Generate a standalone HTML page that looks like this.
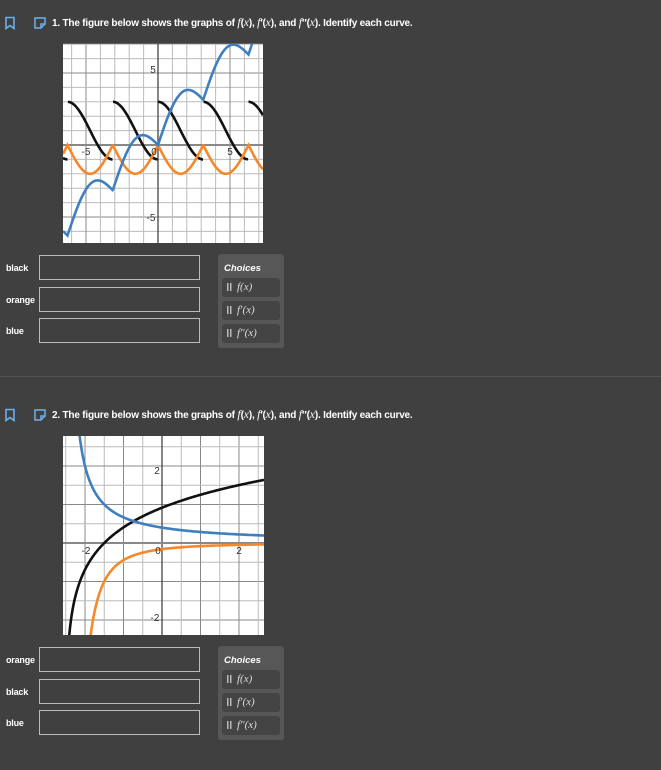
<!DOCTYPE html>
<html style="overflow:hidden;width:661px;height:770px"><head><meta charset="utf-8">
<style>
body{margin:0;width:661px;height:770px;background:#404040;font-family:"Liberation Sans",sans-serif;color:#fff;position:relative;overflow:hidden}
.abs{position:absolute}
.hdr{font-size:10px;font-weight:bold;letter-spacing:-0.2px;white-space:nowrap}
.m{font-family:"Liberation Serif",serif;font-style:italic;font-weight:normal;font-size:11.5px;letter-spacing:0}
.lbl{font-size:9px;font-weight:bold;letter-spacing:-0.2px}
.inp{border:1.5px solid #bbb;width:161px;height:22px;box-sizing:border-box}
.ch{background:#575757;border-radius:3px;width:66px;height:94px}
.ch .t{position:absolute;left:6px;top:9px;font-size:9.5px;font-weight:bold;font-style:italic}
.it{position:absolute;left:4px;width:58px;height:19px;background:#444;border-radius:3px;font-family:"Liberation Serif",serif;font-style:italic;font-size:11px;line-height:19px;color:#ddd}
.it b{display:inline-block;width:5px;height:8px;margin:0 5px 0 5px;vertical-align:-1px;background:repeating-linear-gradient(90deg,#bbb 0 1.5px,transparent 1.5px 3px),#444;}
svg{position:absolute;overflow:hidden}
</style></head><body>
<svg width="14" height="14" class="abs" style="left:3px;top:16px"><path d="M3 1.5h8v11l-4-3-4 3z" fill="none" stroke="#6ab0f0" stroke-width="1.6"/></svg>
<svg width="14" height="14" class="abs" style="left:33px;top:16px"><path d="M2 2h10v6l-4 4H2z M12 8h-4v4" fill="none" stroke="#6ab0f0" stroke-width="1.5"/></svg>
<div class="abs hdr" style="left:52px;top:17px">1. The figure below shows the graphs of <span class="m">f</span>(<span class="m">x</span>), <span class="m">f</span>′(<span class="m">x</span>), and <span class="m">f</span>″(<span class="m">x</span>). Identify each curve.</div>

<svg id="g1" width="661" height="770" style="left:0;top:0"></svg>

<div class="abs lbl" style="left:6px;top:263px">black</div>
<div class="abs lbl" style="left:6px;top:295px">orange</div>
<div class="abs lbl" style="left:6px;top:326px">blue</div>
<div class="abs inp" style="left:39px;top:255px;height:25px"></div>
<div class="abs inp" style="left:39px;top:287px;height:25px"></div>
<div class="abs inp" style="left:39px;top:318px;height:25px"></div>
<div class="abs ch" style="left:218px;top:254px"><div class="t">Choices</div>
<div class="it" style="top:24px"><b></b>f(x)</div>
<div class="it" style="top:47px"><b></b>f′(x)</div>
<div class="it" style="top:70px"><b></b>f″(x)</div></div>

<div class="abs" style="left:0;top:376px;width:661px;height:1px;background:#555"></div>

<svg width="14" height="14" class="abs" style="left:3px;top:408px"><path d="M3 1.5h8v11l-4-3-4 3z" fill="none" stroke="#6ab0f0" stroke-width="1.6"/></svg>
<svg width="14" height="14" class="abs" style="left:33px;top:408px"><path d="M2 2h10v6l-4 4H2z M12 8h-4v4" fill="none" stroke="#6ab0f0" stroke-width="1.5"/></svg>
<div class="abs hdr" style="left:52px;top:409px">2. The figure below shows the graphs of <span class="m">f</span>(<span class="m">x</span>), <span class="m">f</span>′(<span class="m">x</span>), and <span class="m">f</span>″(<span class="m">x</span>). Identify each curve.</div>

<div class="abs lbl" style="left:6px;top:655px">orange</div>
<div class="abs lbl" style="left:6px;top:687px">black</div>
<div class="abs lbl" style="left:6px;top:718px">blue</div>
<div class="abs inp" style="left:39px;top:647px;height:25px"></div>
<div class="abs inp" style="left:39px;top:679px;height:25px"></div>
<div class="abs inp" style="left:39px;top:710px;height:25px"></div>
<div class="abs ch" style="left:218px;top:646px"><div class="t">Choices</div>
<div class="it" style="top:24px"><b></b>f(x)</div>
<div class="it" style="top:47px"><b></b>f′(x)</div>
<div class="it" style="top:70px"><b></b>f″(x)</div></div>

<script>
var S=document.getElementById('g1'),out='';
function graph(x0,y0,x1,y1,ox,oy,u,minor,major,labels,curves){
 out+='<rect x="'+x0+'" y="'+y0+'" width="'+(x1-x0)+'" height="'+(y1-y0)+'" fill="#fff"/>';
 var i;
 for(i=-40;i<=40;i++){var v=i*minor,X=ox+v*u,Y=oy-v*u;var mj=Math.abs(Math.round(v/major)*major-v)<1e-6;
  var c=mj?'#888':'#bbb';
  if(X>=x0&&X<=x1)out+='<line x1="'+X+'" y1="'+y0+'" x2="'+X+'" y2="'+y1+'" stroke="'+c+'" stroke-width="1"/>';
  if(Y>=y0&&Y<=y1)out+='<line x1="'+x0+'" y1="'+Y+'" x2="'+x1+'" y2="'+Y+'" stroke="'+c+'" stroke-width="1"/>';}
 out+='<line x1="'+ox+'" y1="'+y0+'" x2="'+ox+'" y2="'+y1+'" stroke="#444" stroke-width="1.3"/>';
 out+='<line x1="'+x0+'" y1="'+oy+'" x2="'+x1+'" y2="'+oy+'" stroke="#888" stroke-width="2"/>';
 out+='<clipPath id="c'+x0+y0+'"><rect x="'+x0+'" y="'+y0+'" width="'+(x1-x0)+'" height="'+(y1-y0)+'"/></clipPath><g clip-path="url(#c'+x0+y0+')">';
 curves.forEach(function(c){var d='',pen=false,prev=null;
  for(var X=x0;X<=x1;X+=0.5){var x=(X-ox)/u,y=c.f(x);
   if(!isFinite(y)||y>50||y< -50){pen=false;continue;}
   var Y=oy-y*u;
   if(prev!==null&&c.j&&Math.abs(y-prev)>1)pen=false;
   d+=(pen?'L':'M')+X.toFixed(1)+' '+Y.toFixed(1);pen=true;prev=y;}
  out+='<path d="'+d+'" fill="none" stroke="'+c.col+'" stroke-width="2.6"/>';});
 out+='</g>';
 labels.forEach(function(l){out+='<text x="'+l[0]+'" y="'+l[1]+'" font-family="Liberation Sans" font-size="10" fill="#333" text-anchor="middle">'+l[2]+'</text>';});
}
var P=Math.PI;
function md(x){return x-P*Math.floor(x/P);}
graph(63,44,263,243,158,145,14.4,1,5,[[86,155,'-5'],[230,155,'5'],[153,73,'5'],[151,221,'-5'],[154,155,'0']],[
 {f:function(x){return 1+2*Math.cos(md(x));},col:'#111',j:1},
 {f:function(x){return -2*Math.abs(Math.sin(x));},col:'#f6882b'},
 {f:function(x){return x+2*Math.sin(md(x));},col:'#3f7fc0'}]);
graph(63,436,264,635,162,543,38.5,0.5,1,[[86,554,'-2'],[239,554,'2'],[157,474,'2'],[155,621,'-2'],[158,554,'0']],[
 {f:function(x){return x>-2.5?Math.log(x+2.5):NaN;},col:'#111'},
 {f:function(x){return x>-2.5?-1/((x+2.5)*(x+2.5)):NaN;},col:'#f6882b'},
 {f:function(x){return x>-2.5?1/(x+2.5):NaN;},col:'#3f7fc0'}]);
S.innerHTML=out;
</script>
</body></html>
